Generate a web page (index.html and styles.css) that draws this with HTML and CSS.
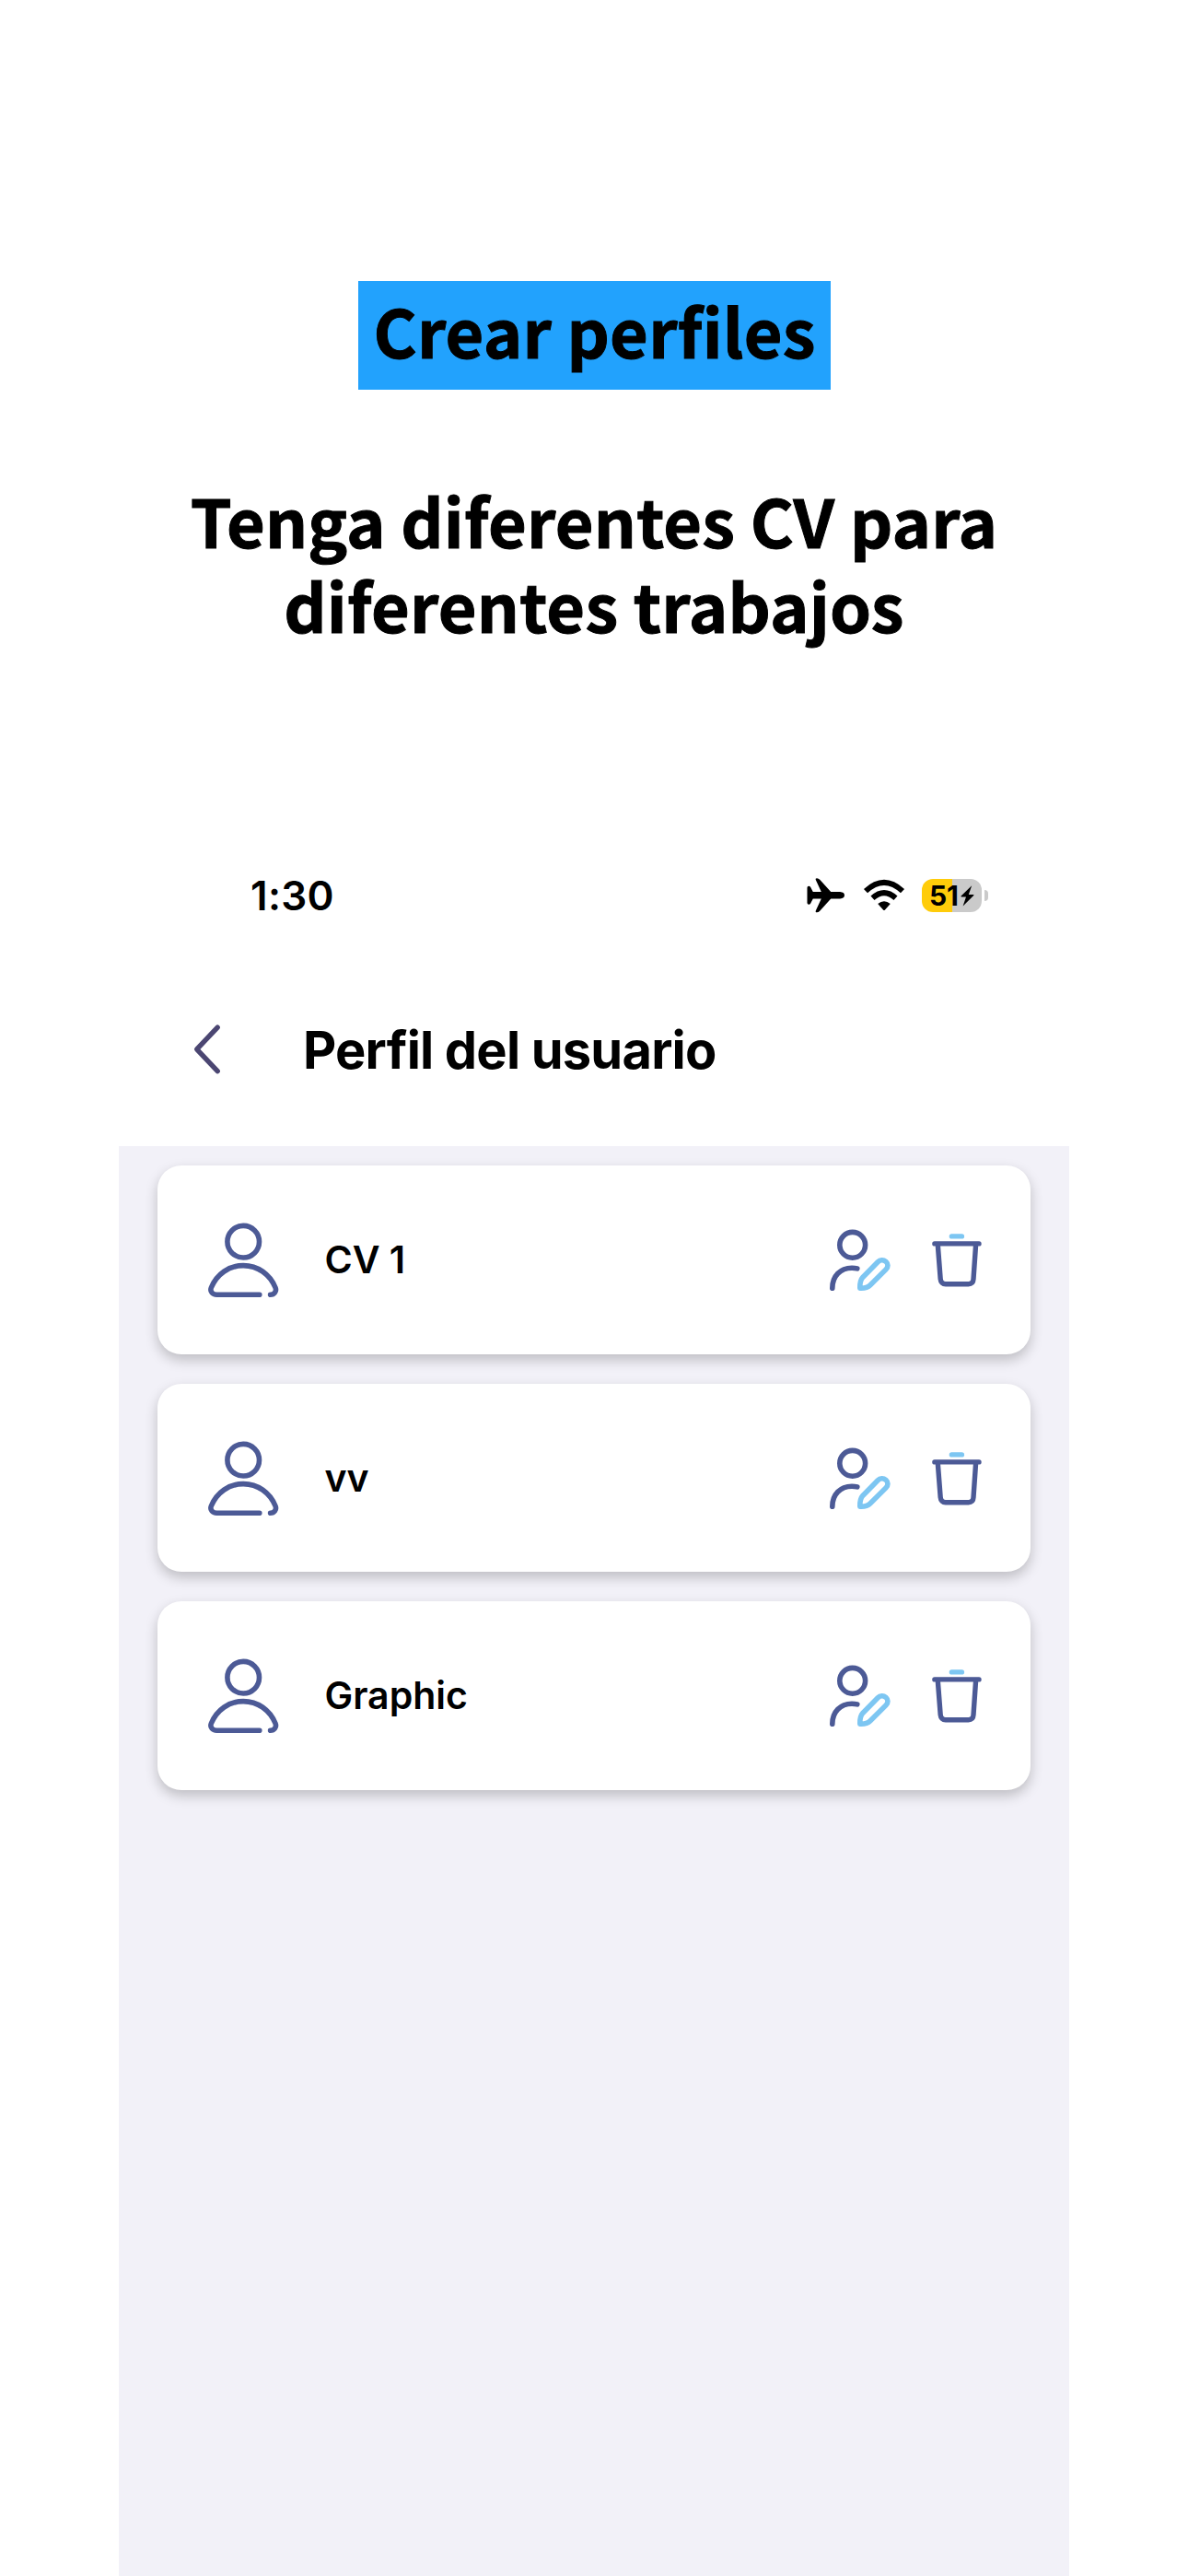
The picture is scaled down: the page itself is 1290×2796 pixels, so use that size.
FILE: index.html
```html
<!DOCTYPE html>
<html lang="es">
<head>
<meta charset="utf-8">
<title>Perfil del usuario</title>
<link rel="stylesheet" href="styles.css">
</head>
<body>
<svg class="sprite" aria-hidden="true">
  <symbol id="user" viewBox="0 0 80 86">
    <g fill="none" stroke="#4c5a96" stroke-width="5.6" stroke-linecap="round" stroke-linejoin="round">
      <circle cx="40.2" cy="22.7" r="17.3"/>
      <path d="M57.8 80.2H11.4C6.6 80.2 3.7 76.5 5.4 72.5C11.5 58 24.5 48.6 40.2 48.6S69 58 75 72.5C76.7 76.5 73.8 80.2 69.6 80.2"/>
    </g>
  </symbol>
  <symbol id="edit" viewBox="0 0 70 72">
    <g fill="none" stroke-width="5.6" stroke-linecap="round" stroke-linejoin="round">
      <circle cx="25.7" cy="18.3" r="13.9" stroke="#4c5a96"/>
      <path d="M3.8 65.2C3.8 52 12.5 43.2 25 43.2C27.5 43.2 29 43.4 30.8 43.9" stroke="#4c5a96"/>
      <path d="M53.2 36.7C55.6 34.3 59.3 34.1 61.9 36.3C64.6 38.8 64.6 42.2 62 44.9L44.8 62.1C42.4 64.5 39.3 65.5 33.8 65.2C33.6 60.2 34.3 56.2 37 53.2Z" stroke="#7dc6f2"/>
    </g>
  </symbol>
  <symbol id="trash" viewBox="0 0 60 72">
    <g fill="none" stroke="#4c5a96" stroke-width="5.4" stroke-linecap="round" stroke-linejoin="round">
      <path d="M4.9 16.9H53M8.3 18L11.2 55.2C11.5 58.6 13.6 60.7 16.8 60.7H41.6C44.8 60.7 46.8 58.8 47 55.4L49.6 18"/>
      <path d="M23.4 8.9H34.4" stroke="#7dc6f2"/>
    </g>
  </symbol>
</svg>

<header class="promo">
  <h1 class="promo-tag">Crear perfiles</h1>
  <p class="promo-text">Tenga diferentes CV para<br>diferentes trabajos</p>
</header>

<main class="phone">
  <div class="status">
    <time class="clock">1:30</time>
    <div class="indicators">
      <svg class="plane" width="42" height="40" viewBox="0 0 42 40"><path d="M36.2 16.1H26.2L14.2 2.8Q12.8 1.2 11 1.2Q9 1.2 9.9 3.2L15.8 16.1H6.8L4.2 11.1Q3.5 9.8 2.2 9.8Q.5 9.8.5 11.5V28Q.5 29.7 2.2 29.7Q3.5 29.7 4.2 28.4L6.8 23.4H15.8L9.9 36.3Q9 38.3 11 38.3Q12.8 38.3 14.2 36.7L26.2 23.4H36.2Q41 23 41 19.75T36.2 16.1Z"/></svg>
      <svg class="wifi" width="46" height="36" viewBox="0 0 46 36"><path d="M3 13.1Q23-5.4 43 13.1" stroke-width="6"/><path d="M10.5 20.7Q23 9.5 35.5 20.7" stroke-width="6"/><path class="dot" d="M16.2 27.1Q23 21.4 29.8 27.1L24 33.4Q23 34.5 22 33.4Z"/></svg>
      <div class="battery">
        <div class="cell"><span>51</span><svg width="15" height="23" viewBox="0 0 15 23"><path d="M12.2.3L.6 11.6Q0 12.3 1 12.5H6L2.6 22.4L14.2 11Q15 10.1 14 9.9H8.8Z"/></svg></div>
        <div class="nub"></div>
      </div>
    </div>
  </div>
  <nav class="topbar">
    <svg class="back" width="34" height="60" viewBox="0 0 34 60"><path d="M27.2 6.2L4.7 29.9L27.2 53.6"/></svg>
    <h2 class="title">Perfil del usuario</h2>
  </nav>
  <section class="profiles">
    <article class="card">
      <svg class="avatar"><use href="#user"/></svg>
      <span class="name">CV 1</span>
      <svg class="edit"><use href="#edit"/></svg>
      <svg class="trash"><use href="#trash"/></svg>
    </article>
    <article class="card">
      <svg class="avatar"><use href="#user"/></svg>
      <span class="name">vv</span>
      <svg class="edit"><use href="#edit"/></svg>
      <svg class="trash"><use href="#trash"/></svg>
    </article>
    <article class="card">
      <svg class="avatar"><use href="#user"/></svg>
      <span class="name">Graphic</span>
      <svg class="edit"><use href="#edit"/></svg>
      <svg class="trash"><use href="#trash"/></svg>
    </article>
  </section>
</main>
</body>
</html>
```
FILE: styles.css
```css
* { box-sizing: border-box; }
body {
  margin: 0;
  width: 1290px;
  height: 2796px;
  overflow: hidden;
  display: flex;
  flex-direction: column;
  align-items: center;
  background: #fff;
  color: #000;
  font-family: Inter, sans-serif;
}
svg { display: block; flex: none; }
.sprite { display: none; }

.promo {
  height: 900px;
  padding-top: 305px;
  display: flex;
  flex-direction: column;
  align-items: center;
  font-family: "Noto Sans CJK SC", sans-serif;
  font-weight: 700;
  font-size: 72px;
  letter-spacing: .2px;
  -webkit-text-stroke: 1px #000;
  flex: none;
}
.promo-tag {
  margin: 0 0 0 1px;
  width: 513px;
  height: 117.5px;
  line-height: 106px;
  background: #22a2fd;
  font-size: 72px;
  text-align: center;
  white-space: nowrap;
}
.promo-text {
  margin: 95.5px 0 0;
  line-height: 92px;
  text-align: center;
  white-space: nowrap;
}

.phone {
  width: 1032px;
  flex: 1;
  display: flex;
  flex-direction: column;
}
.status {
  height: 144px;
  padding: 0 88px 0 143px;
  display: flex;
  justify-content: space-between;
  align-items: center;
}
.clock {
  font-size: 44px;
  font-weight: 600;
  line-height: 54px;
  letter-spacing: .3px;
}
.indicators { display: flex; align-items: center; }
.plane { margin-right: 19px; }
.wifi { margin-right: 18px; fill: none; stroke: #000; }
.wifi .dot { fill: #000; stroke: none; }
.battery { display: flex; align-items: center; gap: 3px; }
.cell {
  width: 65px;
  height: 36px;
  border-radius: 12px;
  background: linear-gradient(90deg, #ffcc0a 33px, #cacaca 33px);
  display: flex;
  align-items: center;
  justify-content: center;
  gap: 2px;
  font-size: 30px;
  font-weight: 700;
  line-height: 36px;
}
.nub {
  width: 4px;
  height: 12px;
  border-radius: 0 5px 5px 0;
  background: #cacaca;
}

.topbar {
  height: 200px;
  padding: 0 0 11px 80px;
  display: flex;
  align-items: center;
}
.back {
  fill: none;
  stroke: #4b4672;
  stroke-width: 5.4;
  stroke-linecap: round;
  stroke-linejoin: round;
}
.title {
  margin: 3px 0 0 86px;
  font-size: 56px;
  font-weight: 700;
  line-height: 68px;
  letter-spacing: -.8px;
  white-space: nowrap;
}

.profiles {
  flex: 1;
  padding: 21px 42px;
  display: flex;
  flex-direction: column;
  gap: 32px;
  background: #f2f1f8;
}
.card {
  height: 204.5px;
  padding: 0 49px 0 53px;
  border-radius: 26px;
  background: #fff;
  box-shadow: 0 6px 14px rgba(0, 0, 0, .22);
  display: flex;
  align-items: center;
  flex: none;
}
.avatar { width: 80px; height: 86px; margin: 2px 48.5px 0 0; }
.name {
  flex: 1;
  font-size: 41px;
  font-weight: 600;
  line-height: 50px;
}
.edit { width: 70px; height: 72px; margin: 3.5px 40px 0 0; }
.trash { width: 60px; height: 72px; margin-top: 3.5px; }
```
